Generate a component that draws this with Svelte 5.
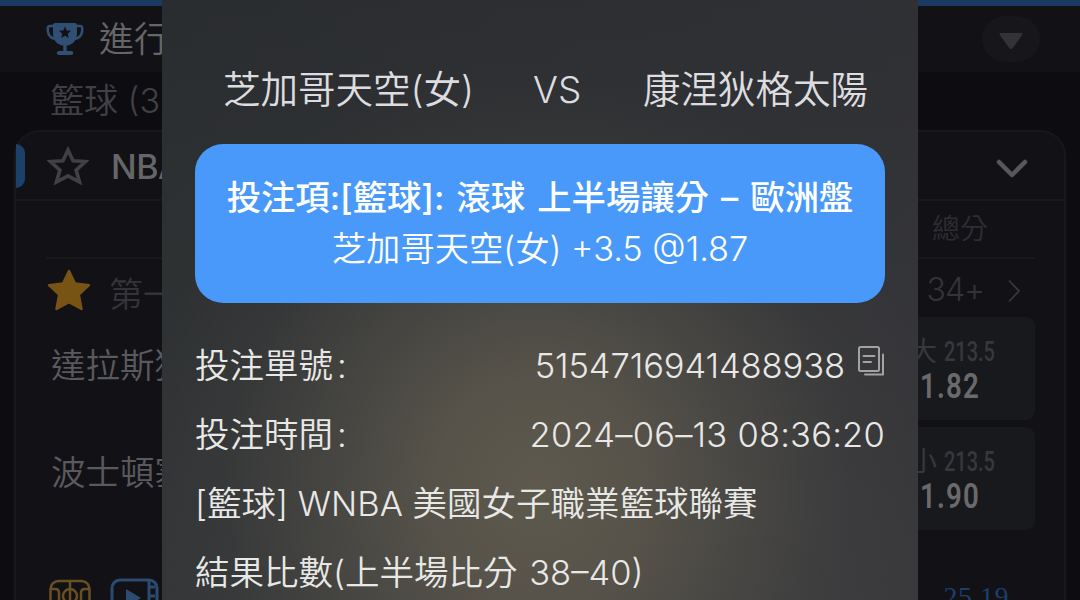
<script>
    export let home = "芝加哥天空(女)";
    export let away = "康涅狄格太陽";

    // rows of the match list behind the dialog
    let matches = [
        { team: "達拉斯獨行俠", side: "大", line: "213.5", odds: "1.82" },
        { team: "波士頓塞爾提克", side: "小", line: "213.5", odds: "1.90" },
    ];

    let betNo = "5154716941488938";
    let betTime = "2024–06–13 08:36:20";
</script>

<div class="screen">
    <div class="page">
        <div class="topline"></div>
        <div class="header">
            <svg class="trophy" width="38" height="34" viewBox="0 0 38 34">
                <path
                    d="M8 4H3.500C1.500 4 1.500 7 2 10c.7 4 3.500 6.500 8 7M30 4h4.500c2 0 2 3 1.500 6-.7 4-3.500 6.500-8 7"
                    fill="none"
                    stroke="#304f73"
                    stroke-width="2.500"
                />
                <path
                    d="M9 1h20c1.500 0 2 1 2 2v8c0 7-4 12-10.300 12.600V29H25c3 0 3 4 0 4H13c-3 0-3-4 0-4h4.300v-5.400C11 23 7 18 7 11V3c0-1 .5-2 2-2z"
                    fill="#304f73"
                />
                <path
                    d="M19 4.500l1.700 3.900 4.300.4-3.200 2.900.9 4.200-3.700-2.200-3.700 2.200.9-4.200-3.200-2.900 4.300-.4z"
                    fill="#121216"
                />
            </svg>
            <span class="heading">進行中</span>
            <span class="drop">
                <svg width="26" height="20" viewBox="0 0 26 20">
                    <path
                        d="M3 2h20q2.500 0 1 2.200L14.800 17q-1.800 2.200-3.600 0L2 4.200Q.5 2 3 2z"
                        fill="#333337"
                    />
                </svg>
            </span>
        </div>
        <div class="sport">籃球 (3)</div>

        <div class="league">
            <div class="league-head">
                <span class="tab"></span>
                <svg class="star" width="42" height="40" viewBox="0 0 42 40">
                    <path
                        d="M21 4l5.100 10.700 12.400.8-9.400 8.600L32.500 36 21 29.800 9.500 36l3.400-11.900-9.400-8.600 12.400-.8z"
                        fill="none"
                        stroke="#414145"
                        stroke-width="3.600"
                    />
                </svg>
                <span class="league-name">NBA</span>
                <svg class="down" width="34" height="24" viewBox="0 0 34 24">
                    <path
                        d="M4 6l13 13L30 6"
                        fill="none"
                        stroke="#58585b"
                        stroke-width="4.500"
                        stroke-linecap="round"
                        stroke-linejoin="round"
                    />
                </svg>
            </div>
            <div class="inner">
                <div class="column-head"><span>總分</span></div>
                <div class="period">
                    <svg width="46" height="44" viewBox="0 0 46 44">
                        <path
                            d="M23 3l6 12.500 14 1.700-10.200 9.400L35.500 41 23 34.200 10.500 41l2.700-14.400L3 17.200l14-1.700z"
                            fill="#785414"
                            stroke="#785414"
                            stroke-width="2.500"
                            stroke-linejoin="round"
                        />
                    </svg>
                    <span class="period-name">第一節</span>
                    <span class="more">34+</span>
                    <svg class="next" width="16" height="26" viewBox="0 0 16 26">
                        <path
                            d="M3 2.500L13 13 3 23.500"
                            fill="none"
                            stroke="#39393d"
                            stroke-width="1.800"
                        />
                    </svg>
                </div>
                {#each matches as match}
                    <div class="match">
                        <span class="team">{match.team}</span>
                        <div class="odds">
                            <div class="total">
                                <span class="side">{match.side}</span>
                                <span class="line">{match.line}</span>
                            </div>
                            <div class="price">{match.odds}</div>
                        </div>
                    </div>
                {/each}
                <div class="tools">
                    <svg width="44" height="34" viewBox="0 0 44 34">
                        <g fill="none" stroke="#685022" stroke-width="2.500">
                            <rect x="2.500" y="3" width="39" height="36" rx="8" />
                            <path d="M22 3v31" />
                            <circle cx="22" cy="18" r="7" />
                            <path d="M3 11h4q4 0 4 4v19M41 11h-4q-4 0-4 4v19" />
                        </g>
                    </svg>
                    <svg width="50" height="34" viewBox="0 0 50 34">
                        <rect
                            x="2"
                            y="2"
                            width="45"
                            height="40"
                            rx="8"
                            fill="none"
                            stroke="#2b4b70"
                            stroke-width="3"
                        />
                        <path
                            d="M39 2v32M39 9h6M39 18h6"
                            stroke="#2b4b70"
                            stroke-width="3"
                        />
                        <path d="M16 11l15 9-15 9z" fill="#2b4b70" />
                    </svg>
                    <span class="date">25.19</span>
                </div>
            </div>
        </div>
    </div>

    <div class="dialog">
        <div class="teams">
            <span class="home">{home}</span>
            <span class="vs">VS</span>
            <span class="away">{away}</span>
        </div>
        <div class="bet">
            <div class="bet-title">投注項:[籃球]: 滾球 上半場讓分 – 歐洲盤</div>
            <div class="bet-pick">{home} +3.5 @1.87</div>
        </div>
        <div class="row">
            <span class="label">投注單號<i>:</i></span>
            <span class="number">{betNo}</span>
            <svg class="copy" width="28" height="32" viewBox="0 0 28 32">
                <g
                    fill="none"
                    stroke="#a3a3a3"
                    stroke-width="2"
                    stroke-linejoin="round"
                    stroke-linecap="round"
                >
                    <rect x="2" y="2" width="20" height="24" rx="1.500" />
                    <path d="M6.500 11h11M6.500 17h7.500M8 29.500h18V9.500" />
                </g>
            </svg>
        </div>
        <div class="row">
            <span class="label">投注時間<i>:</i></span>
            <span class="time">{betTime}</span>
        </div>
        <div class="row"><span class="competition">[籃球] WNBA 美國女子職業籃球聯賽</span></div>
        <div class="row"><span class="result">結果比數(上半場比分 38–40)</span></div>
    </div>
</div>

<style>
    :global(body) {
        background: #0d0c11;
    }
    .screen {
        position: relative;
        width: 1080px;
        height: 600px;
        overflow: hidden;
        font-family: Inter, "Noto Sans CJK TC", sans-serif;
        font-weight: 350;
        white-space: nowrap;
        background: #0d0c11;
    }
    .screen * {
        box-sizing: border-box;
    }
    svg {
        display: block;
        flex: none;
    }
    .topline {
        height: 6px;
        background: #1b3a62;
    }
    .header {
        display: flex;
        align-items: center;
        height: 66px;
        padding: 0 40px 0 46px;
        background: #121216;
    }
    .heading {
        margin: -5px 0 0 15px;
        font-size: 35px;
        color: #666669;
    }
    .drop {
        display: flex;
        align-items: center;
        justify-content: center;
        width: 58px;
        height: 46px;
        padding-top: 4px;
        margin-left: auto;
        border-radius: 23px;
        background: #16161b;
    }
    .sport {
        height: 58px;
        padding-left: 50px;
        font-size: 34px;
        line-height: 58px;
        color: #414145;
    }
    .league {
        width: 1052px;
        height: 520px;
        margin-left: 14px;
        border: 2px solid #17171c;
        border-radius: 26px;
        background: #121116;
    }
    .league-head {
        display: flex;
        align-items: center;
        height: 69px;
        padding-right: 35px;
        border-bottom: 2px solid #18181e;
    }
    .tab {
        width: 9px;
        height: 44px;
        border-radius: 0 9px 9px 0;
        background: #1b416a;
    }
    .star {
        margin-left: 22px;
    }
    .league-name {
        margin: 2px 0 0 22px;
        font-size: 34px;
        font-weight: 500;
        letter-spacing: -0.5px;
        color: #666669;
    }
    .down {
        margin: 4px 0 0 auto;
    }
    .inner {
        padding: 0 29px 0 30px;
    }
    .column-head {
        display: flex;
        justify-content: flex-end;
        height: 58px;
        padding-right: 47px;
        border-bottom: 2px solid #18181d;
        font-size: 28px;
        line-height: 56px;
        color: #2d2d32;
    }
    .period {
        display: flex;
        align-items: center;
        height: 58px;
        padding-right: 13px;
    }
    .period svg:first-child {
        margin-top: 3px;
    }
    .period-name {
        margin: 8px 0 0 17px;
        font-size: 34px;
        color: #343438;
    }
    .more {
        margin: 2px 22px 0 auto;
        font-size: 32px;
        letter-spacing: -1px;
        color: #343438;
    }
    .next {
        margin-top: 6px;
    }
    .match {
        display: flex;
        justify-content: space-between;
        height: 103px;
        margin-bottom: 7px;
    }
    .team {
        padding-left: 5px;
        font-size: 34.5px;
        line-height: 97px;
        color: #5a5a5e;
    }
    .match + .match .team {
        line-height: 92px;
    }
    .odds {
        width: 190px;
        height: 103px;
        padding: 15px 40px 0 0;
        border-radius: 9px;
        background: #18191d;
        font-family: Roboto, "Noto Sans CJK TC", sans-serif;
        text-align: right;
    }
    .total {
        display: flex;
        justify-content: flex-end;
        gap: 7px;
        height: 36px;
        font-size: 27px;
        line-height: 40px;
        font-weight: 400;
        color: #37383c;
    }
    .line {
        width: 51px;
        font-weight: 500;
        transform: scaleX(0.74);
        transform-origin: left;
    }
    .price {
        height: 38px;
        padding-right: 19px;
        font-size: 35px;
        line-height: 38px;
        font-weight: 600;
        color: #6a6a6d;
        letter-spacing: 1.5px;
        transform: scaleX(0.79);
        transform-origin: right;
    }
    .tools {
        display: flex;
        gap: 18px;
        padding: 41px 26px 0 2px;
    }
    .date {
        margin: 3px 0 0 auto;
        font-family: "Liberation Serif", serif;
        font-size: 28px;
        font-weight: 400;
        line-height: 32px;
        letter-spacing: 0.5px;
        color: #1b3f69;
    }

    /* bet slip dialog, lies over the match list */
    .dialog {
        position: absolute;
        top: 0;
        left: 162px;
        width: 756px;
        height: 600px;
        padding: 59px 33px 0;
        color: #e8e8e6;
        background:
            radial-gradient(
                ellipse 400px 430px at 375px 490px,
                #5e594d 0%,
                rgba(93, 88, 77, 0.86) 25%,
                rgba(86, 83, 75, 0.55) 52%,
                rgba(74, 73, 69, 0.2) 78%,
                rgba(62, 62, 62, 0) 100%
            ),
            linear-gradient(90deg, rgba(44, 48, 49, 0.4), rgba(60, 58, 64, 0.35)),
            linear-gradient(#282a2e, #2e3032 35%, #38393b);
    }
    .teams {
        display: flex;
        height: 85px;
        padding-left: 28px;
        font-size: 37.5px;
        line-height: 61px;
        color: #dddde0;
    }
    .home {
        width: 310px;
    }
    .vs {
        width: 110px;
        font-size: 37px;
    }
    .bet {
        height: 159px;
        padding-top: 28px;
        border-radius: 28px;
        text-align: center;
        color: #fff;
        background: #4899f9;
    }
    .bet-title {
        height: 52px;
        font-size: 34.4px;
        font-weight: 500;
        line-height: 52px;
        letter-spacing: -0.05px;
        word-spacing: 3px;
    }
    .bet-pick {
        height: 50px;
        font-size: 34.3px;
        line-height: 50px;
    }
    .row {
        display: flex;
        align-items: center;
        height: 69px;
        font-size: 34.5px;
        line-height: 69px;
    }
    .bet + .row {
        margin-top: 28px;
    }
    .label {
        margin-right: auto;
    }
    .label i {
        margin-left: 4px;
        font-style: normal;
    }
    .number {
        letter-spacing: -0.1px;
    }
    .time {
        letter-spacing: 0.2px;
    }
    .copy {
        margin: -10px 0 0 12px;
    }
    .result {
        word-spacing: 2px;
    }
</style>
